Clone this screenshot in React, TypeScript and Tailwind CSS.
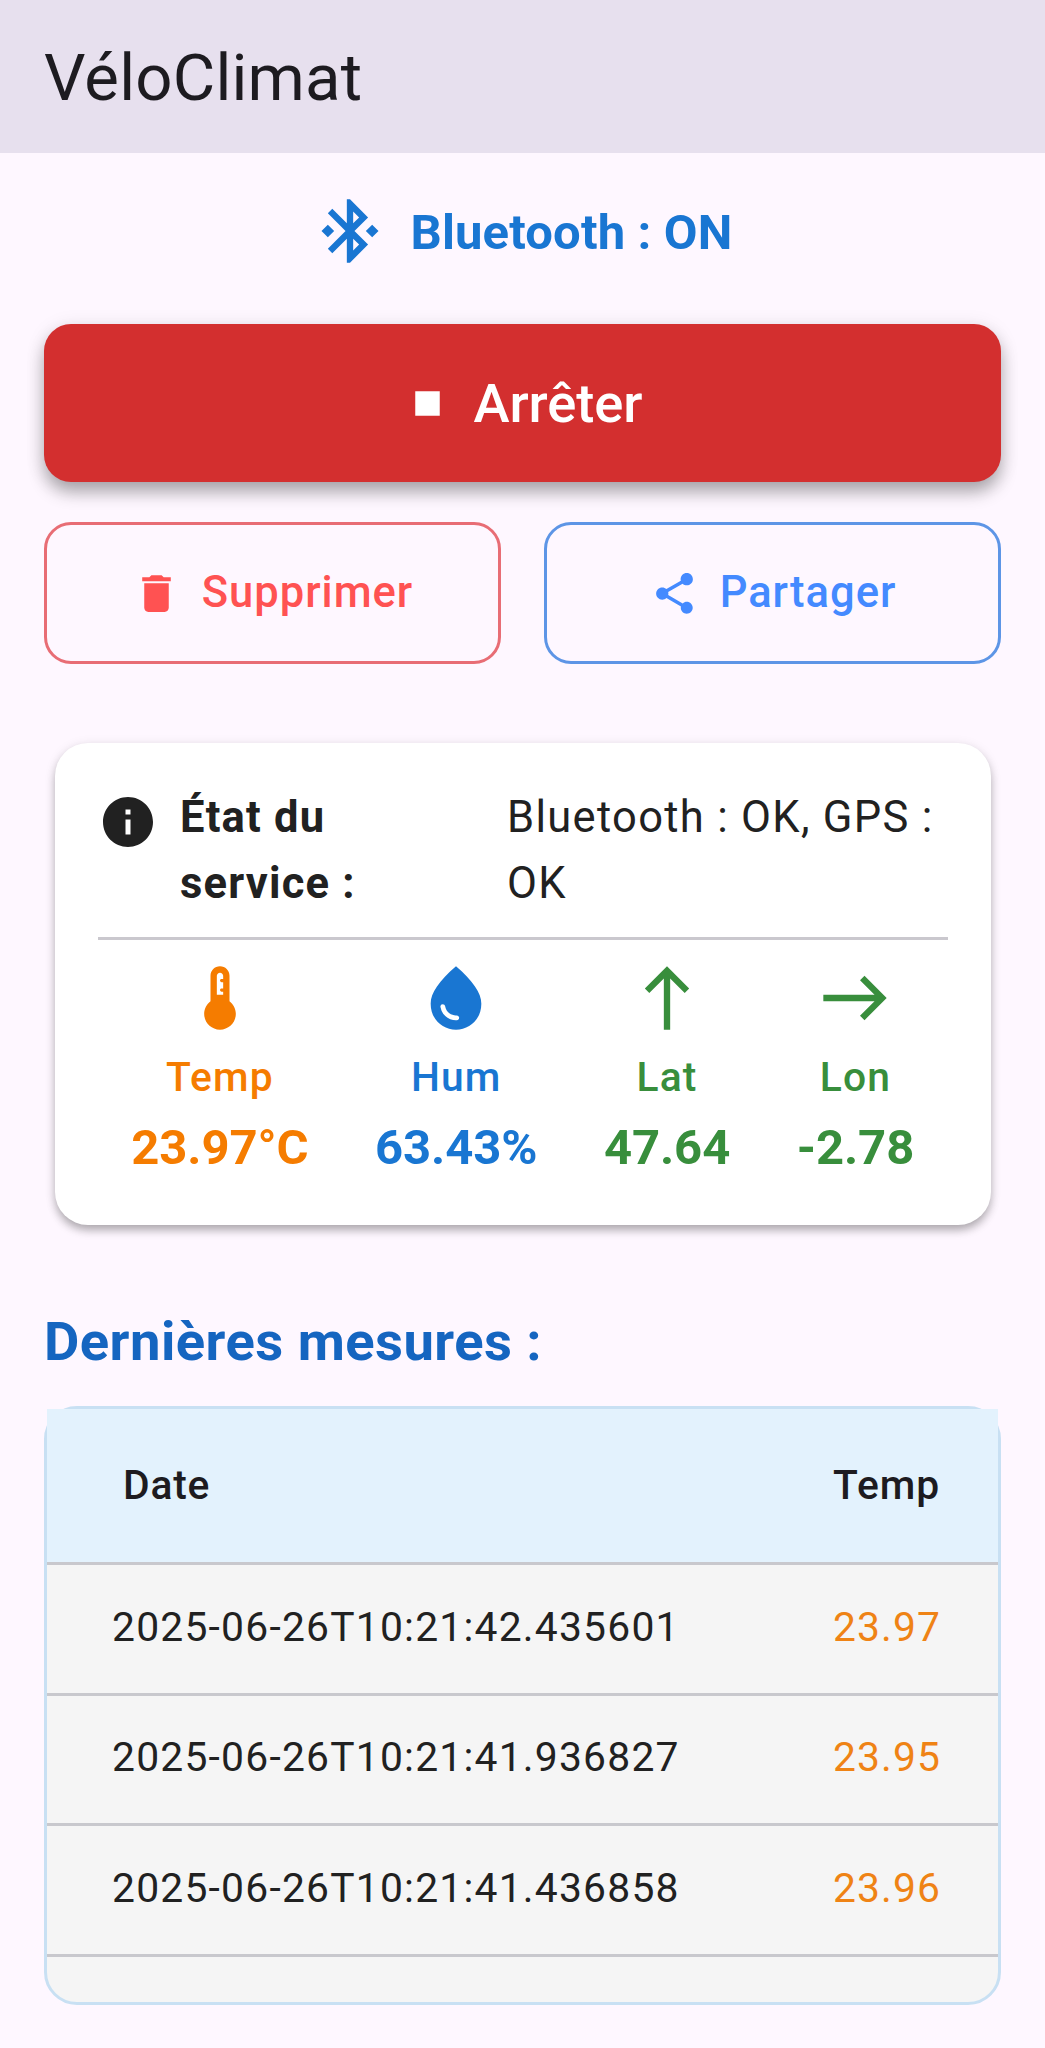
import type { ReactNode } from "react";
import { MdBluetoothConnected, MdDelete, MdEast, MdInfo, MdNorth, MdShare, MdStop, MdWaterDrop } from "react-icons/md";

const measures = [
  { date: "2025-06-26T10:21:42.435601", temp: "23.97" },
  { date: "2025-06-26T10:21:41.936827", temp: "23.95" },
  { date: "2025-06-26T10:21:41.436858", temp: "23.96" },
];

function ThermometerIcon() {
  return (
    <svg viewBox="0 0 24 24" fill="currentColor" className="size-[76px]">
      <path d="M15 13V5c0-1.66-1.34-3-3-3S9 3.34 9 5v8c-1.21.91-2 2.37-2 4 0 2.76 2.24 5 5 5s5-2.24 5-5c0-1.63-.79-3.09-2-4zm-4-8c0-.55.45-1 1-1s1 .45 1 1v1h-.5c-.28 0-.5.22-.5.5s.22.5.5.5h.5v2h-.5c-.28 0-.5.22-.5.5s.22.5.5.5h.5v1h-2V5z" />
    </svg>
  );
}

function Stat({ icon, label, value, color }: { icon: ReactNode; label: string; value: string; color: string }) {
  return (
    <div className={`flex flex-col items-center ${color}`}>
      {icon}
      <span className="mt-3 text-[40.8px] leading-[58px] font-medium tracking-[1.1px]">{label}</span>
      <span className="mt-[7px] text-[49px] leading-[70px] font-bold tracking-[-0.1px]">{value}</span>
    </div>
  );
}

export default function App() {
  return (
    <div className="min-h-[2048px] bg-[#fef7ff] font-[Roboto,sans-serif] text-[#1d1b20]">
      <header className="flex h-[153px] items-center bg-[#e7e0ee] px-11 pt-[2px]">
        <h1 className="text-[65.3px] leading-none tracking-[0.2px]">VéloClimat</h1>
      </header>

      <main className="px-11">
        {/* Bluetooth status */}
        <div className="mt-10 flex h-[76px] items-center justify-center gap-[22px] text-[#1976d2]">
          <MdBluetoothConnected className="size-[76px]" />
          <span className="pt-[2px] text-[49px] leading-none font-bold tracking-[0.15px]">Bluetooth : ON</span>
        </div>

        {/* Actions */}
        <button className="mt-[55px] flex h-[158px] w-full items-center justify-center gap-[22px] rounded-[27px] bg-[#d32f2f] text-white shadow-[0_11px_17px_-1px_rgba(0,0,0,0.3),0_3px_20px_rgba(0,0,0,0.1)]">
          <MdStop className="size-[49px]" />
          <span className="pt-[2px] text-[54.4px] leading-none font-medium tracking-[-0.1px]">Arrêter</span>
        </button>
        <div className="mt-10 grid h-[142px] grid-cols-2 gap-[43px]">
          <button className="flex items-center justify-center gap-[21px] rounded-[27px] border-[3px] border-[#e86d75] text-[#ff5252]">
            <MdDelete className="size-[49px]" />
            <span className="text-[43.5px] leading-none font-medium tracking-[1px]">Supprimer</span>
          </button>
          <button className="flex items-center justify-center gap-[21px] rounded-[27px] border-[3px] border-[#5d95e6] pl-[1px] text-[#448aff]">
            <MdShare className="size-[49px]" />
            <span className="text-[43.5px] leading-none font-medium tracking-[1px]">Partager</span>
          </button>
        </div>

        {/* Service state and live values */}
        <section className="mr-[10px] ml-[10.5px] mt-[79px] h-[482px] rounded-[33px] bg-white px-[43.5px] pt-[42px] shadow-[0_6px_10px_-1px_rgba(0,0,0,0.28),0_2px_12px_rgba(0,0,0,0.1)]">
          <div className="flex items-start text-[43.5px] leading-[65.5px] text-[#212121]">
            <MdInfo className="mt-[7px] size-[60px]" />
            <p className="ml-[22px] w-[327px] pr-[100px] font-bold tracking-[1.2px]">État du service :</p>
            <p className="flex-1 tracking-[1.3px]">Bluetooth : OK, GPS : OK</p>
          </div>
          <div className="mt-[21px] h-[3px] bg-[#cac8ce]" />
          <div className="mt-5 flex justify-around">
            <Stat icon={<ThermometerIcon />} label="Temp" value="23.97°C" color="text-[#f57c00]" />
            <Stat icon={<MdWaterDrop className="size-[76px]" />} label="Hum" value="63.43%" color="text-[#1976d2]" />
            <Stat icon={<MdNorth className="size-[76px]" />} label="Lat" value="47.64" color="text-[#388e3c]" />
            <Stat icon={<MdEast className="size-[76px]" />} label="Lon" value="-2.78" color="text-[#388e3c]" />
          </div>
        </section>

        <h2 className="mt-[81px] text-[54.4px] leading-[72px] font-bold tracking-[0.45px] text-[#1565c0]">Dernières mesures :</h2>

        {/* Latest measures, the header keeps square corners over the rounded frame */}
        <div className="mt-[28px] h-[599px] rounded-[33px] border-[3px] border-[#c8e0f3] bg-[#f5f5f5] text-[40.8px] leading-none">
          <div className="flex h-[153px] items-center justify-between bg-[#e3f2fd] pr-[58px] pl-[76px] font-medium">
            <span className="tracking-[0.8px]">Date</span>
            <span className="tracking-[0.9px]">Temp</span>
          </div>
          {measures.map((m) => (
            <div key={m.date} className="flex h-[130.6px] items-center border-t-[3px] border-[#c8c8cd] pb-[3px] pl-[65px] text-[#212121]">
              <span className="w-[721px] tracking-[1.22px]">{m.date}</span>
              <span className="tracking-[1.1px] text-[#ef8315]">{m.temp}</span>
            </div>
          ))}
          <div className="border-t-[3px] border-[#c8c8cd]" />
        </div>
      </main>
    </div>
  );
}
